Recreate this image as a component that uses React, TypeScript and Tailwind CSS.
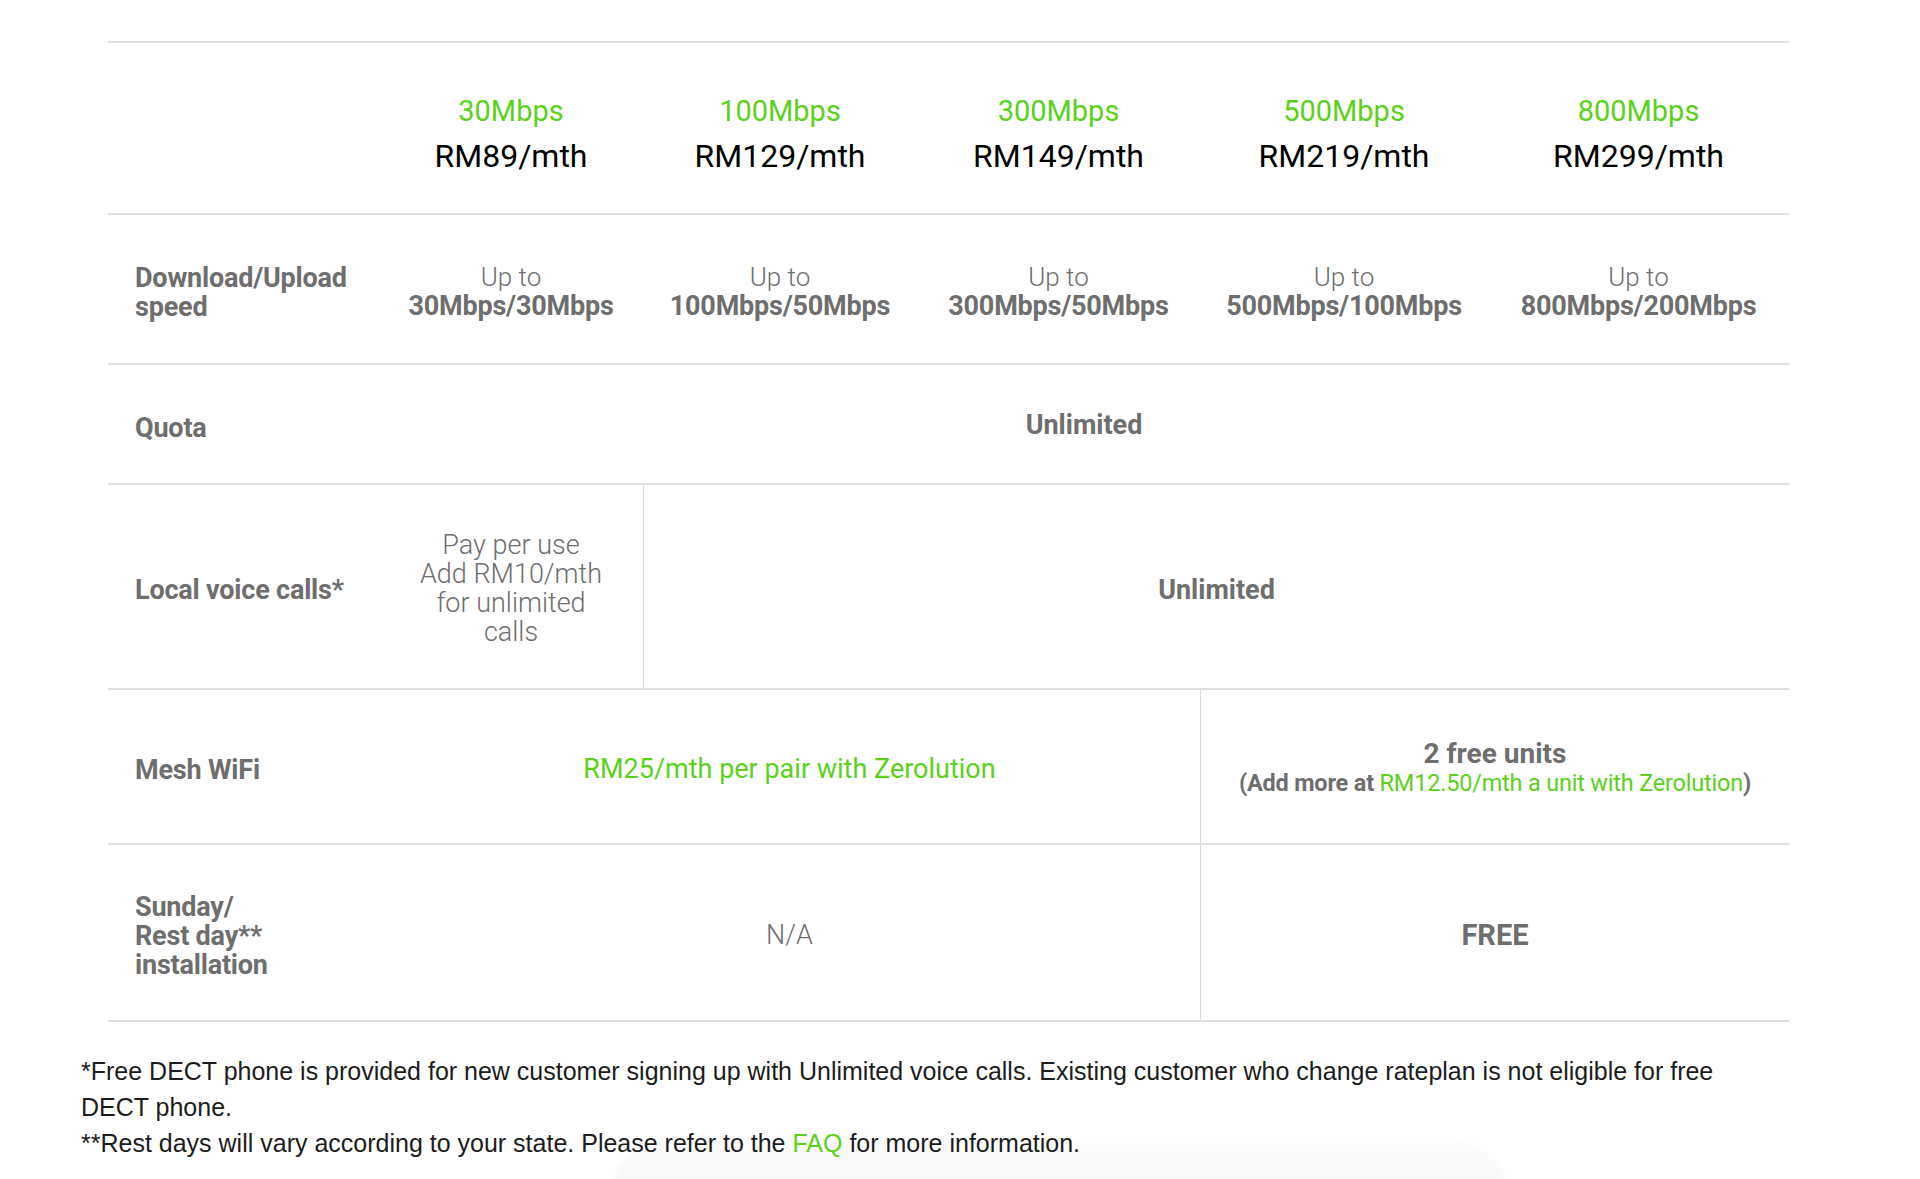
import React from "react";

const GREEN = "text-[#5cd11c]";

const plans = [
  { speed: "30Mbps", price: "RM89/mth", dl: "30Mbps/30Mbps" },
  { speed: "100Mbps", price: "RM129/mth", dl: "100Mbps/50Mbps" },
  { speed: "300Mbps", price: "RM149/mth", dl: "300Mbps/50Mbps" },
  { speed: "500Mbps", price: "RM219/mth", dl: "500Mbps/100Mbps" },
  { speed: "800Mbps", price: "RM299/mth", dl: "800Mbps/200Mbps" },
];

const rowGrid =
  "grid grid-cols-[271px_264px_274px_283px_288px_301px] border-b-2 border-[#e0e0e0]";

function Label({ children }: { children: React.ReactNode }) {
  return (
    <div className="flex items-center pl-[27px] pt-[8px] font-bold text-[27px] leading-[29px] text-[#6e6e6e] tracking-[-0.2px]">
      <div>{children}</div>
    </div>
  );
}

export default function App() {
  return (
    <div
      className="relative w-[1920px] h-[1179px] overflow-hidden bg-white"
      style={{ fontFamily: "Roboto, 'Liberation Sans', sans-serif" }}
    >
      <div className="absolute left-[612px] top-[1146px] w-[894px] h-[60px] rounded-t-[48px] bg-gradient-to-b from-[#fbfbfb] to-[#f7f7f7] shadow-[0_-3px_14px_rgba(0,0,0,0.025)]" />

      <div className="relative ml-[108px] mt-[41px] w-[1681px] border-t-2 border-[#e0e0e0]">
        {/* Header */}
        <div className={`${rowGrid} h-[172px]`}>
          <div />
          {plans.map((p) => (
            <div key={p.speed} className="flex flex-col items-center justify-center pt-[11px]">
              <div className={`${GREEN} text-[29px] leading-[44px]`}>{p.speed}</div>
              <div className="text-black text-[32px] leading-[46px]">{p.price}</div>
            </div>
          ))}
        </div>

        {/* Download/Upload */}
        <div className={`${rowGrid} h-[150px]`}>
          <Label>
            Download/Upload
            <br />
            speed
          </Label>
          {plans.map((p) => (
            <div
              key={p.dl}
              className="flex flex-col items-center justify-center text-center leading-[29px] text-[#6e6e6e] pt-[5px]"
            >
              <div className="font-light text-[26px]">Up to</div>
              <div className="font-bold text-[27px] tracking-[-0.2px]">{p.dl}</div>
            </div>
          ))}
        </div>

        {/* Quota */}
        <div className={`${rowGrid} h-[120px]`}>
          <Label>Quota</Label>
          <div className="col-span-5 flex items-center justify-center font-bold text-[27px] leading-[29px] text-[#6e6e6e] pt-[3px]">
            Unlimited
          </div>
        </div>

        {/* Local voice calls */}
        <div className={`${rowGrid} h-[205px]`}>
          <Label>Local voice calls*</Label>
          <div className="flex items-center justify-center text-center font-light text-[27px] leading-[29px] text-[#6e6e6e] px-[30px] pt-[4px]">
            <div>
              Pay per use
              <br />
              Add RM10/mth for unlimited calls
            </div>
          </div>
          <div className="col-span-4 flex items-center justify-center border-l border-[#d6dce4] font-bold text-[27px] leading-[29px] text-[#6e6e6e] pt-[7px]">
            Unlimited
          </div>
        </div>

        {/* Mesh WiFi */}
        <div className={`${rowGrid} h-[155px]`}>
          <Label>Mesh WiFi</Label>
          <div className={`col-span-3 flex items-center justify-center text-[27px] leading-[29px] pt-[5px] ${GREEN}`}>
            RM25/mth per pair with Zerolution
          </div>
          <div className="col-span-2 flex flex-col items-center justify-center border-l border-[#d6dce4] text-[#6e6e6e] text-center">
            <div className="font-bold text-[28px] leading-[33px]">2 free units</div>
            <div className="font-bold text-[23.5px] leading-[27px] tracking-[-0.2px]">
              (Add more at <span className={`font-normal ${GREEN}`}>RM12.50/mth a unit with Zerolution</span>)
            </div>
          </div>
        </div>

        {/* Sunday */}
        <div className={`${rowGrid} h-[177px]`}>
          <Label>
            Sunday/
            <br />
            Rest day**
            <br />
            installation
          </Label>
          <div className="col-span-3 flex items-center justify-center font-light text-[27px] leading-[29px] text-[#6e6e6e] pt-[5px]">
            N/A
          </div>
          <div className="col-span-2 flex items-center justify-center border-l border-[#d6dce4] font-bold text-[29px] leading-[29px] text-[#6e6e6e] pt-[5px]">
            FREE
          </div>
        </div>
      </div>

      {/* Footnotes */}
      <div
        className="relative ml-[81px] mt-[31px] w-[1680px] text-[25px] leading-[36px] text-[#1c1c1c]"
        style={{ fontFamily: "'Liberation Sans', Arial, sans-serif" }}
      >
        <p>
          *Free DECT phone is provided for new customer signing up with Unlimited voice calls. Existing customer who
          change rateplan is not eligible for free DECT phone.
        </p>
        <p>
          **Rest days will vary according to your state. Please refer to the{" "}
          <span className={GREEN}>FAQ</span> for more information.
        </p>
      </div>
    </div>
  );
}
